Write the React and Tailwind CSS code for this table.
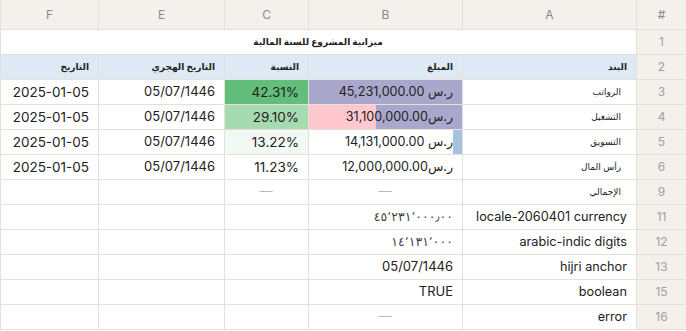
import React from "react";

const cols = ["A", "B", "C", "E", "F"];

const rows = [
  { n: 3, a: "الرواتب", b: "45,231,000.00 ر.س", bar: "full", c: "42.31%", cBg: "bg-[#63be7b]" },
  { n: 4, a: "التشغيل", b: "31,100,000.00ر.س", bar: "pink", c: "29.10%", cBg: "bg-[#a6dbb1]" },
  { n: 5, a: "التسويق", b: "14,131,000.00 ر.س", bar: "blue", c: "13.22%", cBg: "bg-[#f2f9f4]" },
  { n: 6, a: "رأس المال", b: "12,000,000.00ر.س", bar: null, c: "11.23%", cBg: "bg-white" },
];

const extras = [
  { n: 11, a: "locale-2060401 currency", b: "٤٥٬٢٣١٬٠٠٠٫٠٠", small: true },
  { n: 12, a: "arabic-indic digits", b: "١٤٬١٣١٬٠٠٠", small: true },
  { n: 13, a: "hijri anchor", b: "05/07/1446" },
  { n: 15, a: "boolean", b: "TRUE" },
  { n: 16, a: "error", b: null },
];

const cell = "h-[25px] border-b border-l border-[#e6e1d8] flex items-center pl-2 pr-[9px] overflow-hidden whitespace-nowrap";
const num = "h-[25px] border-b border-l border-[#e6e1d8] bg-[#f4f1ec] flex items-center justify-center text-[12px] text-[#a0a0a0]";
const colHead = "h-[30px] border-b border-l border-[#e6e1d8] bg-[#f4f1ec] flex items-center justify-center text-[12px] text-[#888]";
const arabic = "text-[9px]";
const dash = <span className="text-[#b8b8b8] text-[13px]">—</span>;

const BCell = ({ r }) => {
  const bg =
    r.bar === "full" ? "bg-[#a9a7cc]" : r.bar === "pink" ? "bg-[#ffc7ce]" : "bg-white";
  return (
    <div className={`${cell} ${bg} relative text-[12.6px]`}>
      {r.bar === "pink" && <div className="absolute right-0 top-0 h-full w-[86px] bg-[#a9a7cc]" />}
      {r.bar === "blue" && <div className="absolute right-0 top-0 h-full w-[9px] bg-[#a6c1e1]" />}
      <span dir="ltr" className="relative">{r.b}</span>
    </div>
  );
};

export default function App() {
  return (
    <div
      dir="rtl"
      className="w-[686px] h-[331px] bg-white text-[13.5px] text-[#222] overflow-hidden"
      style={{ fontFamily: 'Inter, "DejaVu Sans", sans-serif' }}
    >
      <div className="grid grid-cols-[50px_174px_154px_84px_126px_98px]">
        {/* column headers */}
        <div className={colHead}>#</div>
        {cols.map((c) => (
          <div key={c} className={colHead}>
            {c}
          </div>
        ))}

        {/* title row */}
        <div className={num}>1</div>
        <div className={`${cell} col-span-5 justify-center font-bold ${arabic}`}>ميزانية المشروع للسنة المالية</div>

        {/* header row */}
        <div className={num}>2</div>
        {["البند", "المبلغ", "النسبة", "التاريخ الهجري", "التاريخ"].map((h) => (
          <div key={h} className={`${cell} bg-[#dde9f4] font-bold ${arabic}`}>{h}</div>
        ))}

        {/* data rows */}
        {rows.map((r) => (
          <React.Fragment key={r.n}>
            <div className={num}>{r.n}</div>
            <div className={`${cell} ${arabic} pr-[15px]`}>{r.a}</div>
            <BCell r={r} />
            <div className={`${cell} ${r.cBg}`}>{r.c}</div>
            <div className={`${cell} text-[13px]`}>05/07/1446</div>
            <div className={cell}>2025-01-05</div>
          </React.Fragment>
        ))}

        {/* totals */}
        <div className={num}>9</div>
        <div className={`${cell} ${arabic} pr-[15px]`}>الإجمالي</div>
        <div className={`${cell} justify-center`}>{dash}</div>
        <div className={`${cell} justify-center`}>{dash}</div>
        <div className={cell} />
        <div className={cell} />

        {/* edge cases */}
        {extras.map((r) => (
          <React.Fragment key={r.n}>
            <div className={num}>{r.n}</div>
            <div className={`${cell} text-[12.7px]`}>{r.a}</div>
            <div className={`${cell} ${r.b === null ? "justify-center" : ""} ${r.small ? "text-[12.5px] text-[#444]" : "text-[13px]"}`}>
              {r.b === null ? dash : r.b}
            </div>
            <div className={cell} />
            <div className={cell} />
            <div className={cell} />
          </React.Fragment>
        ))}
      </div>
    </div>
  );
}
